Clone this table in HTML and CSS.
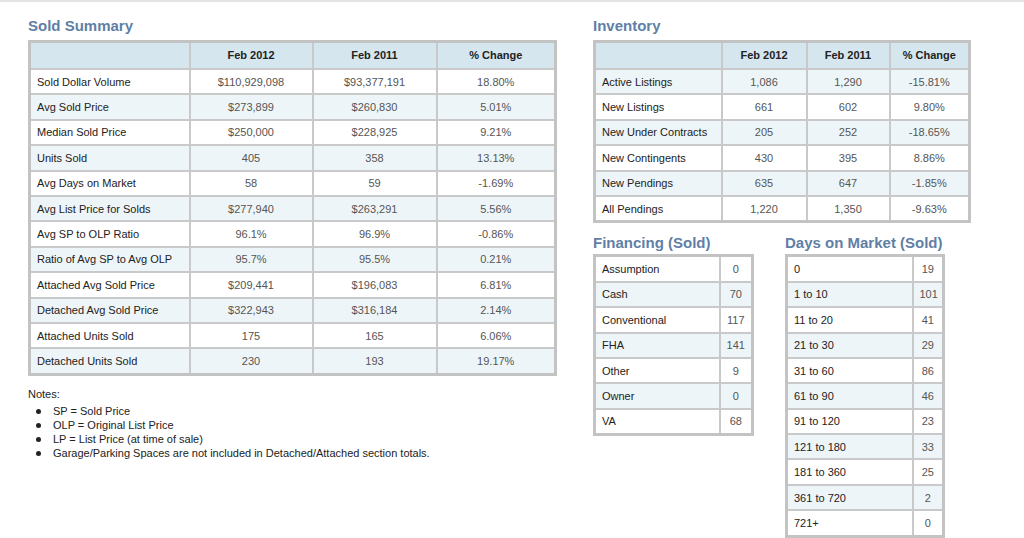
FILE: index.html
```html
<!DOCTYPE html>
<html lang="en">
<head>
    <meta charset="UTF-8">
    <title>Market Summary</title>
    <link rel="stylesheet" href="styles.css">
</head>
<body>
    <div class="page">
        <div class="left-col">
            <h2>Sold Summary</h2>
            <table class="grid summary">
                <colgroup><col style="width:160px"><col style="width:123px"><col style="width:124px"><col style="width:119px"></colgroup>
                <tr class="head"><th></th><th>Feb 2012</th><th>Feb 2011</th><th>% Change</th></tr>
                <tr><td>Sold Dollar Volume</td><td class="num">$110,929,098</td><td class="num">$93,377,191</td><td class="num">18.80%</td></tr>
                <tr class="alt"><td>Avg Sold Price</td><td class="num">$273,899</td><td class="num">$260,830</td><td class="num">5.01%</td></tr>
                <tr><td>Median Sold Price</td><td class="num">$250,000</td><td class="num">$228,925</td><td class="num">9.21%</td></tr>
                <tr class="alt"><td>Units Sold</td><td class="num">405</td><td class="num">358</td><td class="num">13.13%</td></tr>
                <tr><td>Avg Days on Market</td><td class="num">58</td><td class="num">59</td><td class="num">-1.69%</td></tr>
                <tr class="alt"><td>Avg List Price for Solds</td><td class="num">$277,940</td><td class="num">$263,291</td><td class="num">5.56%</td></tr>
                <tr><td>Avg SP to OLP Ratio</td><td class="num">96.1%</td><td class="num">96.9%</td><td class="num">-0.86%</td></tr>
                <tr class="alt"><td>Ratio of Avg SP to Avg OLP</td><td class="num">95.7%</td><td class="num">95.5%</td><td class="num">0.21%</td></tr>
                <tr><td>Attached Avg Sold Price</td><td class="num">$209,441</td><td class="num">$196,083</td><td class="num">6.81%</td></tr>
                <tr class="alt"><td>Detached Avg Sold Price</td><td class="num">$322,943</td><td class="num">$316,184</td><td class="num">2.14%</td></tr>
                <tr><td>Attached Units Sold</td><td class="num">175</td><td class="num">165</td><td class="num">6.06%</td></tr>
                <tr class="alt"><td>Detached Units Sold</td><td class="num">230</td><td class="num">193</td><td class="num">19.17%</td></tr>
            </table>
            <div class="notes">
                <p>Notes:</p>
                <ul>
                    <li>SP = Sold Price</li>
                    <li>OLP = Original List Price</li>
                    <li>LP = List Price (at time of sale)</li>
                    <li>Garage/Parking Spaces are not included in Detached/Attached section totals.</li>
                </ul>
            </div>
        </div>

        <div class="right-col">
            <h2>Inventory</h2>
            <table class="grid inventory">
                <colgroup><col style="width:127px"><col style="width:85px"><col style="width:83px"><col style="width:80px"></colgroup>
                <tr class="head"><th></th><th>Feb 2012</th><th>Feb 2011</th><th>% Change</th></tr>
                <tr class="alt"><td>Active Listings</td><td class="num">1,086</td><td class="num">1,290</td><td class="num">-15.81%</td></tr>
                <tr><td>New Listings</td><td class="num">661</td><td class="num">602</td><td class="num">9.80%</td></tr>
                <tr class="alt"><td>New Under Contracts</td><td class="num">205</td><td class="num">252</td><td class="num">-18.65%</td></tr>
                <tr><td>New Contingents</td><td class="num">430</td><td class="num">395</td><td class="num">8.86%</td></tr>
                <tr class="alt"><td>New Pendings</td><td class="num">635</td><td class="num">647</td><td class="num">-1.85%</td></tr>
                <tr><td>All Pendings</td><td class="num">1,220</td><td class="num">1,350</td><td class="num">-9.63%</td></tr>
            </table>

            <div class="pair">
                <div class="financing">
                    <h2>Financing (Sold)</h2>
                    <table class="grid fin">
                        <colgroup><col style="width:125px"><col style="width:33px"></colgroup>
                        <tr><td>Assumption</td><td class="num">0</td></tr>
                        <tr class="alt"><td>Cash</td><td class="num">70</td></tr>
                        <tr><td>Conventional</td><td class="num">117</td></tr>
                        <tr class="alt"><td>FHA</td><td class="num">141</td></tr>
                        <tr><td>Other</td><td class="num">9</td></tr>
                        <tr class="alt"><td>Owner</td><td class="num">0</td></tr>
                        <tr><td>VA</td><td class="num">68</td></tr>
                    </table>
                </div>
                <div class="days">
                    <h2>Days on Market (Sold)</h2>
                    <table class="grid dom">
                        <colgroup><col style="width:126px"><col style="width:31px"></colgroup>
                        <tr><td>0</td><td class="num">19</td></tr>
                        <tr class="alt"><td>1 to 10</td><td class="num">101</td></tr>
                        <tr><td>11 to 20</td><td class="num">41</td></tr>
                        <tr class="alt"><td>21 to 30</td><td class="num">29</td></tr>
                        <tr><td>31 to 60</td><td class="num">86</td></tr>
                        <tr class="alt"><td>61 to 90</td><td class="num">46</td></tr>
                        <tr><td>91 to 120</td><td class="num">23</td></tr>
                        <tr class="alt"><td>121 to 180</td><td class="num">33</td></tr>
                        <tr><td>181 to 360</td><td class="num">25</td></tr>
                        <tr class="alt"><td>361 to 720</td><td class="num">2</td></tr>
                        <tr><td>721+</td><td class="num">0</td></tr>
                    </table>
                </div>
            </div>
        </div>
    </div>
</body>
</html>
```

FILE: styles.css
```css
body {
    font-family: "Liberation Sans", Arial, sans-serif;
    margin: 0;
    padding: 0;
    background-color: #fff;
    color: #222;
}

.page {
    display: flex;
    border-top: 2px solid #e4e4e4;
    padding: 15px 0 0 28px;
    gap: 36px;
}

.left-col {
    flex: 0 0 529px;
    min-width: 0;
}

h2 {
    font-size: 15px;
    line-height: 18px;
    font-weight: bold;
    color: #5f7fa6;
    margin: 0 0 5px 0;
}

.grid {
    border-collapse: collapse;
    table-layout: fixed;
    border: 3px solid #c3c3c3;
    font-size: 11px;
}

.grid th,
.grid td {
    border: 2px solid #c9c9c9;
    padding: 0 6px;
    height: 23.4px;
    white-space: nowrap;
    overflow: hidden;
}

.grid .head th {
    background-color: #d6e6ee;
    color: #222;
    font-weight: bold;
    height: 24px;
    padding-bottom: 1px;
    text-align: center;
}

.grid td.num {
    text-align: center;
    color: #555;
}

.grid tr.alt td {
    background-color: #eef5f8;
}

.summary {
    width: 526px;
}

.inventory {
    width: 375px;
}

.notes {
    font-size: 11px;
    color: #222;
    margin-top: 11px;
}

.notes p {
    margin: 0 0 3px 0;
    line-height: 14px;
}

.notes ul {
    margin: 0;
    padding-left: 25px;
    list-style: none;
}

.notes li {
    line-height: 14px;
    position: relative;
}

.notes li::before {
    content: "";
    position: absolute;
    left: -17px;
    top: 5px;
    width: 5px;
    height: 5px;
    border-radius: 50%;
    background-color: #222;
}

.pair {
    display: flex;
    gap: 31px;
    margin-top: 11px;
}

.pair h2 {
    margin-bottom: 2px;
}

.fin {
    width: 158px;
}

.dom {
    width: 157px;
}
```
